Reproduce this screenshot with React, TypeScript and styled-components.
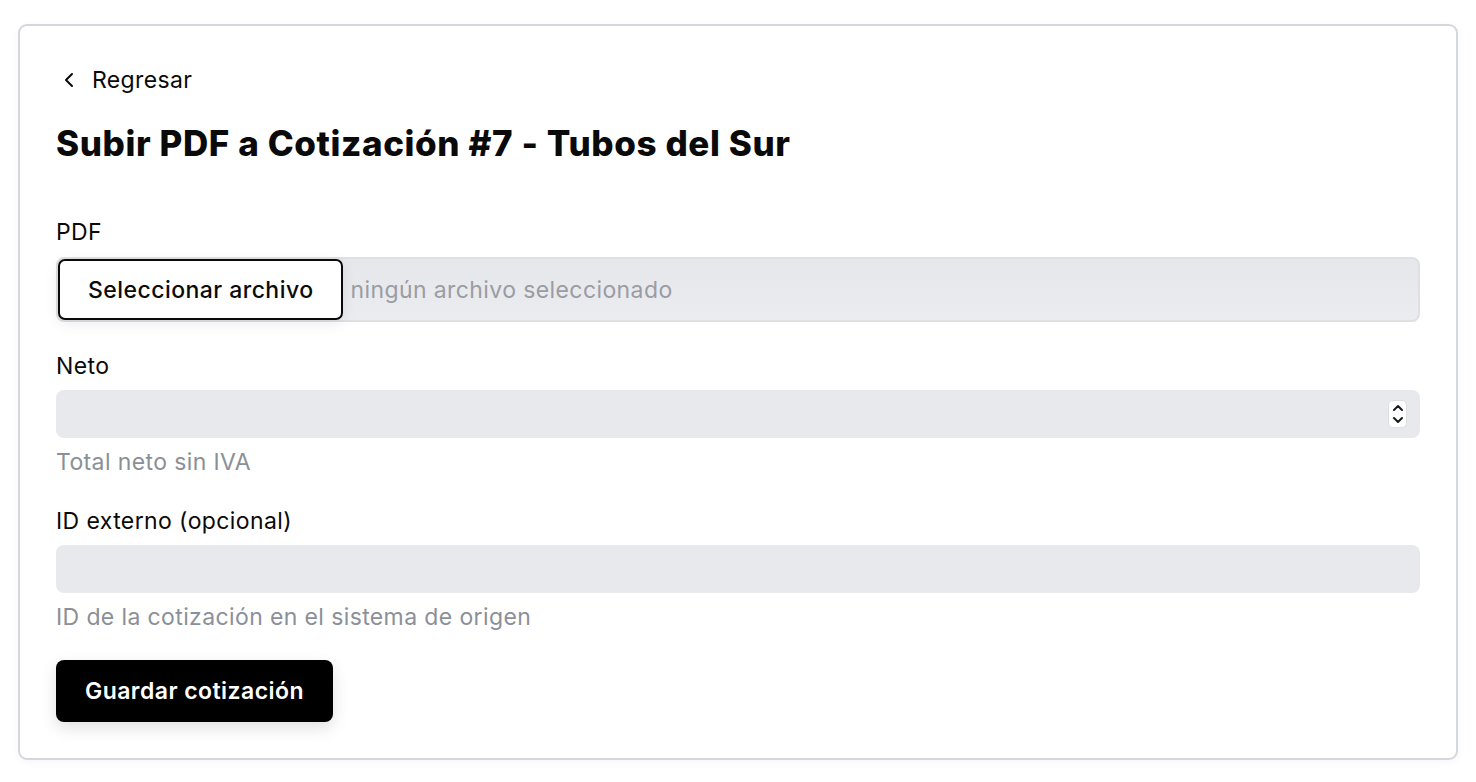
import React from "react";
import styled, { createGlobalStyle } from "styled-components";

const GlobalStyle = createGlobalStyle`
  html, body {
    margin: 0;
    padding: 0;
    background: #ffffff;
    font-family: Inter, "Noto Sans", sans-serif;
    color: #0a0a0a;
    -webkit-font-smoothing: antialiased;
  }
  * { box-sizing: border-box; }
`;

const Page = styled.div`
  padding: 24px 18px 20px 18px;
`;

const Card = styled.section`
  border: 2px solid #d4d7dc;
  border-radius: 9px;
  background: #ffffff;
  padding: 39px 36px 36px 36px;
  box-shadow: 0 2px 8px rgba(0, 0, 0, 0.04);
  display: flex;
  flex-direction: column;
`;

const BackLink = styled.a`
  display: flex;
  align-items: center;
  gap: 11px;
  height: 30px;
  font-size: 23px;
  letter-spacing: 0.35px;
  line-height: 30px;
  color: #0a0a0a;
  text-decoration: none;
  margin-left: 1px;
`;

const Title = styled.h1`
  margin: 28px 0 0 0;
  font-size: 35px;
  line-height: 40px;
  font-weight: 800;
  letter-spacing: 0.6px;
`;

const Form = styled.form`
  display: flex;
  flex-direction: column;
  margin-top: 55px;
`;

const Field = styled.div<{ $gap?: number }>`
  display: flex;
  flex-direction: column;
  margin-top: ${(p) => p.$gap ?? 0}px;
`;

const Label = styled.label`
  font-size: 23px;
  letter-spacing: 0.4px;
  line-height: 28px;
  font-weight: 400;
  color: #0a0a0a;
`;

const FileBox = styled.div`
  margin-top: 11px;
  height: 65px;
  display: flex;
  align-items: center;
  gap: 7px;
  border: 2px solid #dfe0e4;
  border-radius: 8px;
  background: linear-gradient(#e6e7eb, #ebecf0);
`;

const FileButton = styled.span`
  height: 61px;
  display: flex;
  align-items: center;
  padding: 0 28px;
  border: 2px solid #0a0a0a;
  border-radius: 7px;
  background: #ffffff;
  font-size: 23px;
  letter-spacing: 0.45px;
  font-weight: 500;
  color: #0a0a0a;
  box-shadow: 0 4px 14px rgba(0, 0, 0, 0.08);
`;

const FileText = styled.span`
  font-size: 23px;
  letter-spacing: 0.4px;
  color: #9a9ca3;
`;

const Input = styled.div`
  margin-top: 10px;
  height: 48px;
  border-radius: 8px;
  background: #e8e9ed;
  display: flex;
  align-items: center;
  justify-content: flex-end;
  padding-right: 13px;
`;

const Spinner = styled.div`
  width: 19px;
  height: 28px;
  border-radius: 5px;
  background: #ffffff;
  display: flex;
  flex-direction: column;
  align-items: center;
  justify-content: space-between;
  padding: 3px 0;
  border: 1px solid #dedfe3;
`;

const Helper = styled.div`
  margin-top: 10px;
  font-size: 23px;
  letter-spacing: 0.38px;
  line-height: 28px;
  color: #8b9098;
`;

const SubmitButton = styled.button`
  margin-top: 29px;
  align-self: flex-start;
  height: 62px;
  padding: 0 29px;
  border: none;
  border-radius: 8px;
  background: #000000;
  color: #ffffff;
  font-family: Inter, "Noto Sans", sans-serif;
  font-size: 23px;
  letter-spacing: 0.45px;
  font-weight: 600;
  box-shadow: 0 6px 16px rgba(0, 0, 0, 0.12);
  cursor: pointer;
`;

const Chevron = ({ dir }: { dir: "up" | "down" }) => (
  <svg width="12" height="8" viewBox="0 0 12 8" fill="none">
    <path
      d={dir === "up" ? "M2 6 L6 2 L10 6" : "M2 2 L6 6 L10 2"}
      stroke="#1a1a1a"
      strokeWidth="2"
      strokeLinecap="round"
      strokeLinejoin="round"
    />
  </svg>
);

export default function App() {
  return (
    <>
      <GlobalStyle />
      <Page>
        <Card>
          <BackLink href="#">
            <svg width="24" height="24" viewBox="0 0 24 24" fill="none">
              <path
                d="M15 18 L9 12 L15 6"
                stroke="#0a0a0a"
                strokeWidth="2"
                strokeLinecap="round"
                strokeLinejoin="round"
              />
            </svg>
            Regresar
          </BackLink>
          <Title>Subir PDF a Cotización #7 - Tubos del Sur</Title>
          <Form onSubmit={(e) => e.preventDefault()}>
            <Field>
              <Label>PDF</Label>
              <FileBox>
                <FileButton>Seleccionar archivo</FileButton>
                <FileText>ningún archivo seleccionado</FileText>
              </FileBox>
            </Field>
            <Field $gap={30}>
              <Label>Neto</Label>
              <Input>
                <Spinner>
                  <Chevron dir="up" />
                  <Chevron dir="down" />
                </Spinner>
              </Input>
              <Helper>Total neto sin IVA</Helper>
            </Field>
            <Field $gap={31}>
              <Label>ID externo (opcional)</Label>
              <Input />
              <Helper>ID de la cotización en el sistema de origen</Helper>
            </Field>
            <SubmitButton type="submit">Guardar cotización</SubmitButton>
          </Form>
        </Card>
      </Page>
    </>
  );
}
